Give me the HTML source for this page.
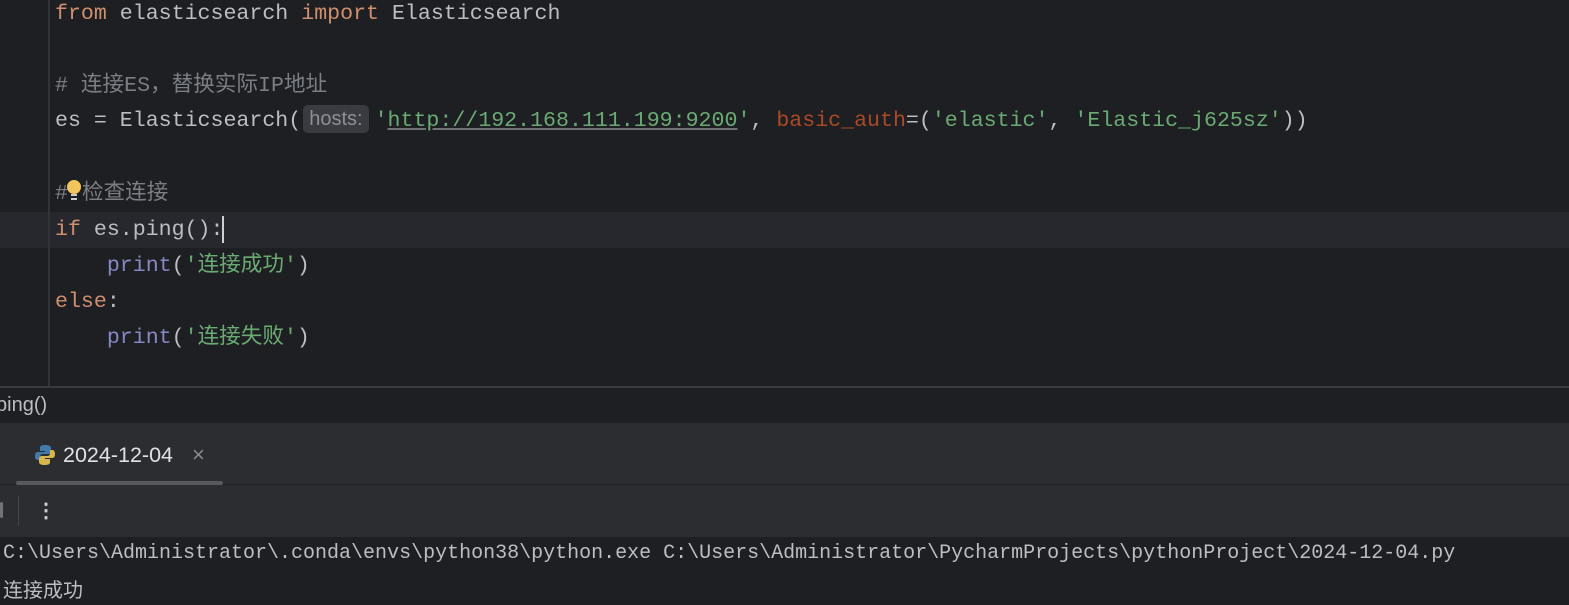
<!DOCTYPE html>
<html><head><meta charset="utf-8"><style>
body{margin:0;width:1569px;height:605px;background:#1e1f22;overflow:hidden;position:relative;font-family:"Liberation Mono","Noto Sans CJK SC",monospace;}
.l{position:absolute;left:55px;font-size:21.6px;line-height:36px;height:36px;color:#bcbec4;white-space:pre;}
.k{color:#cf8e6d}.s{color:#6aab73}.c{color:#7a7e85}.p{color:#cf8e6d}.b{color:#8888c6}
.hint{display:inline-block;background:#393b40;color:#8c8f94;font-family:"Liberation Sans",sans-serif;font-size:20px;border-radius:5px;padding:0 6px;line-height:28px;margin:0 6px 0 2px;vertical-align:1px}
.u{text-decoration:underline;text-decoration-color:#6f7378}
.con{position:absolute;left:3px;font-size:20px;color:#bcbec4;white-space:pre;}
</style></head><body>
<div style="position:absolute;left:0;top:212px;width:1569px;height:36px;background:#26282e"></div>
<div style="position:absolute;left:48px;top:0;width:2px;height:386px;background:#313438"></div>
<div class="l" style="top:-4px"><span class="k">from</span> elasticsearch <span class="k">import</span> Elasticsearch</div>
<div class="l c" style="top:68px"># 连接ES，替换实际IP地址</div>
<div class="l" style="top:103px">es = Elasticsearch(<span class="hint">hosts:</span><span class="s">'<span class="u">http://192.168.111.199:9200</span>'</span>, <span style="color:#aa4926">basic_auth</span>=(<span class="s">'elastic'</span>, <span class="s">'Elastic_j625sz'</span>))</div>
<div class="l c" style="top:176px">#<span style="display:inline-block;width:14px"></span>检查连接</div>
<div style="position:absolute;left:67px;top:180px;width:14px;height:14px;border-radius:50%;background:#f2c55c"></div>
<div style="position:absolute;left:71px;top:194px;width:6px;height:6px;border-top:2px solid #ccc;border-bottom:2px solid #ccc;box-sizing:border-box"></div>
<div class="l" style="top:212px"><span class="k">if</span> es.ping():</div>
<div style="position:absolute;left:222px;top:216px;width:2px;height:27px;background:#ced0d6"></div>
<div class="l" style="top:248px">    <span class="b">print</span>(<span class="s">'连接成功'</span>)</div>
<div class="l" style="top:284px"><span class="k">else</span>:</div>
<div class="l" style="top:320px">    <span class="b">print</span>(<span class="s">'连接失败'</span>)</div>
<div style="position:absolute;left:0;top:386px;width:1569px;height:2px;background:#393b40"></div>
<div style="position:absolute;left:-4px;top:388px;width:1569px;height:35px;background:#1e1f22;color:#bcbec4;font-family:'Liberation Sans',sans-serif;font-size:20px;line-height:35px;">ping()</div>
<div style="position:absolute;left:0;top:423px;width:1569px;height:114px;background:#2b2d30"></div>
<div style="position:absolute;left:0;top:484px;width:1569px;height:1px;background:#1e1f22"></div>
<svg style="position:absolute;left:34px;top:444px" width="22" height="22" viewBox="0 0 22 22"><path d="M11 1c-5 0-5 2-5 3v3h5v1H4c-3 0-3 3-3 4s0 4 3 4h2v-3c0-2 1-3 3-3h5c2 0 3-1 3-3V4c0-2-2-3-6-3z" fill="#3f7cad"/><path d="M11 21c5 0 5-2 5-3v-3h-5v-1h7c3 0 3-3 3-4s0-4-3-4h-2v3c0 2-1 3-3 3H8c-2 0-3 1-3 3v3c0 2 2 3 6 3z" fill="#d9b64a"/></svg>
<div style="position:absolute;left:63px;top:441px;color:#dfe1e5;font-family:'Liberation Sans',sans-serif;font-size:21.5px;line-height:28px">2024-12-04</div>
<div style="position:absolute;left:192px;top:441px;color:#868a91;font-family:'Liberation Sans',sans-serif;font-size:22px;line-height:28px">×</div>
<div style="position:absolute;left:16px;top:481px;width:207px;height:4px;border-radius:2px;background:#57595e"></div>
<div style="position:absolute;left:18px;top:496px;width:1px;height:30px;background:#43454a"></div>
<div style="position:absolute;left:0;top:502px;width:3px;height:16px;border-radius:2px;background:#6f737a"></div>
<div style="position:absolute;left:36px;top:501px;color:#ced0d6;font-size:20px;line-height:20px;font-family:'Liberation Sans',sans-serif;font-weight:bold">⋮</div>
<div style="position:absolute;left:0;top:537px;width:1569px;height:68px;background:#1e1f22"></div>
<div class="con" style="top:542px">C:\Users\Administrator\.conda\envs\python38\python.exe C:\Users\Administrator\PycharmProjects\pythonProject\2024-12-04.py</div>
<div class="con" style="top:574px">连接成功</div>
</body></html>
